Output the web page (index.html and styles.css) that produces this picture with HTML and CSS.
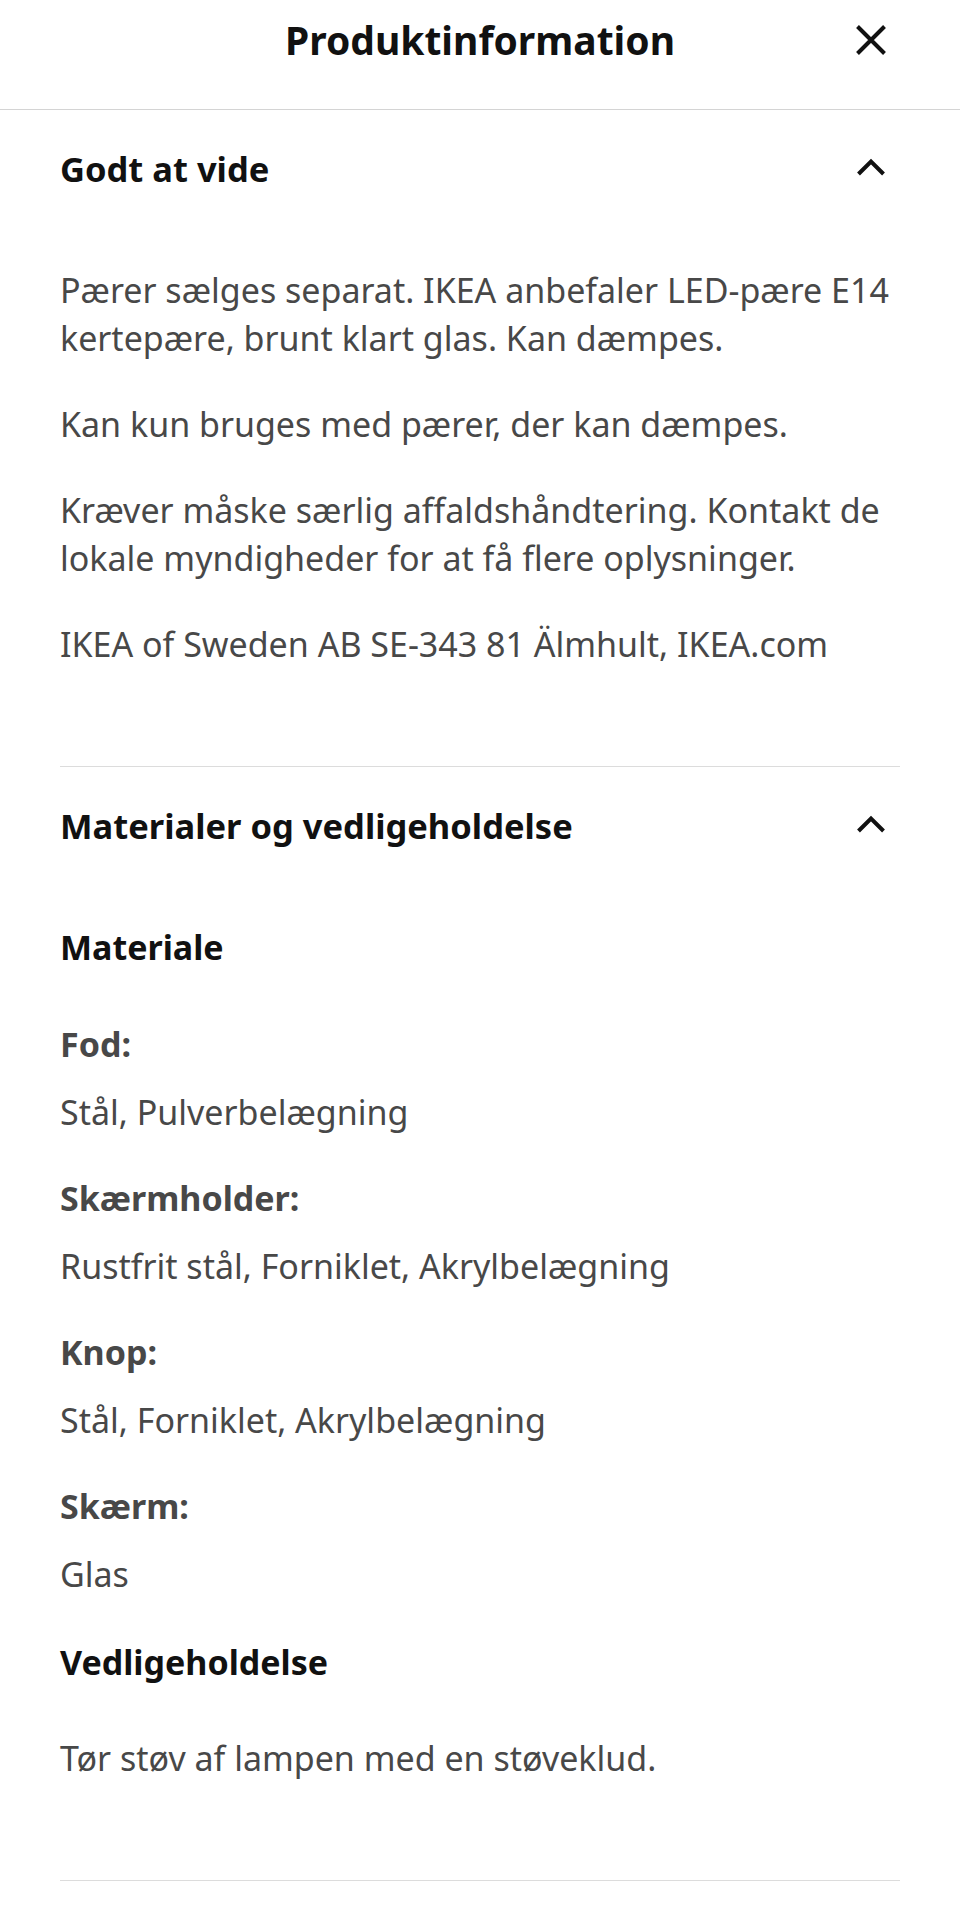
FILE: index.html
```html
<!DOCTYPE html>
<html lang="da">
<head>
<meta charset="utf-8">
<title>Produktinformation</title>
<link rel="stylesheet" href="styles.css">
</head>
<body>
<div class="sheet">
  <header class="topbar">
    <span></span>
    <h1 class="title">Produktinformation</h1>
    <button class="close" aria-label="Luk">
      <svg width="48" height="48" viewBox="0 0 48 48"><path d="M10.5 10.5 L37.5 37.5 M37.5 10.5 L10.5 37.5" stroke="#111" stroke-width="4" fill="none"/></svg>
    </button>
  </header>

  <section class="section">
    <div class="sec-head">
      <h2 class="sec-title">Godt at vide</h2>
      <svg class="chev" width="48" height="48" viewBox="0 0 48 48"><path d="M11.5 29 L24 16.5 L36.5 29" stroke="#111" stroke-width="4" fill="none"/></svg>
    </div>
    <div class="sec-body">
      <p class="para">Pærer sælges separat. IKEA anbefaler LED-pære E14 kertepære, brunt klart glas. Kan dæmpes.</p>
      <p class="para">Kan kun bruges med pærer, der kan dæmpes.</p>
      <p class="para">Kræver måske særlig affaldshåndtering. Kontakt de lokale myndigheder for at få flere oplysninger.</p>
      <p class="para">IKEA of Sweden AB SE-343 81 Älmhult, IKEA.com</p>
    </div>
  </section>

  <section class="section">
    <div class="sec-head">
      <h2 class="sec-title">Materialer og vedligeholdelse</h2>
      <svg class="chev" width="48" height="48" viewBox="0 0 48 48"><path d="M11.5 29 L24 16.5 L36.5 29" stroke="#111" stroke-width="4" fill="none"/></svg>
    </div>
    <div class="sec-body">
      <h3 class="sub">Materiale</h3>
      <dl class="mats">
        <div class="mat"><dt class="label">Fod:</dt><dd class="value">Stål, Pulverbelægning</dd></div>
        <div class="mat"><dt class="label">Skærmholder:</dt><dd class="value">Rustfrit stål, Forniklet, Akrylbelægning</dd></div>
        <div class="mat"><dt class="label">Knop:</dt><dd class="value">Stål, Forniklet, Akrylbelægning</dd></div>
        <div class="mat"><dt class="label">Skærm:</dt><dd class="value">Glas</dd></div>
      </dl>
      <h3 class="sub sub-care">Vedligeholdelse</h3>
      <p class="para">Tør støv af lampen med en støveklud.</p>
    </div>
  </section>
</div>
</body>
</html>
```

FILE: styles.css
```css
html, body {
  margin: 0;
  padding: 0;
  background: #fff;
}
body {
  font-family: "Noto Sans", "Open Sans", sans-serif;
  color: #111;
}
.sheet {
  width: 960px;
}
.topbar {
  display: grid;
  grid-template-columns: 1fr auto 1fr;
  align-items: center;
  align-content: start;
  height: 110px;
  box-sizing: border-box;
  padding: 16px 65px 0 65px;
  border-bottom: 1px solid #d4d4d4;
}
.title {
  margin: 0;
  font-size: 39px;
  line-height: 48px;
  font-weight: 700;
  color: #111;
}
.close {
  justify-self: end;
  width: 48px;
  height: 48px;
  padding: 0;
  border: 0;
  background: none;
  display: block;
}
.close svg { display: block; }
.section {
  margin: 0 60px;
  padding-top: 35px;
  padding-bottom: 98px;
  border-bottom: 1px solid #dcdcdc;
}
.sec-head {
  display: flex;
  align-items: center;
  justify-content: space-between;
  padding-right: 5px;
}
.sec-title {
  margin: 0;
  font-size: 34.5px;
  line-height: 48px;
  font-weight: 700;
  color: #111;
}
.chev { display: block; }
.sec-body {
  padding-top: 73px;
}
.para {
  margin: 0 0 38px;
  font-size: 34px;
  line-height: 48px;
  color: #484848;
}
.para:last-child { margin-bottom: 0; }
.sub {
  margin: 0 0 49px;
  font-size: 34px;
  line-height: 48px;
  font-weight: 700;
  color: #111;
}
.sub-care {
  margin-top: 40px;
  margin-bottom: 48px;
}
.mats {
  margin: 0;
  display: flex;
  flex-direction: column;
  gap: 38px;
}
.mat {
  display: flex;
  flex-direction: column;
  gap: 20px;
}
.label {
  font-size: 34px;
  line-height: 48px;
  font-weight: 700;
  color: #484848;
}
.value {
  margin: 0;
  font-size: 34px;
  line-height: 48px;
  color: #484848;
}
```
